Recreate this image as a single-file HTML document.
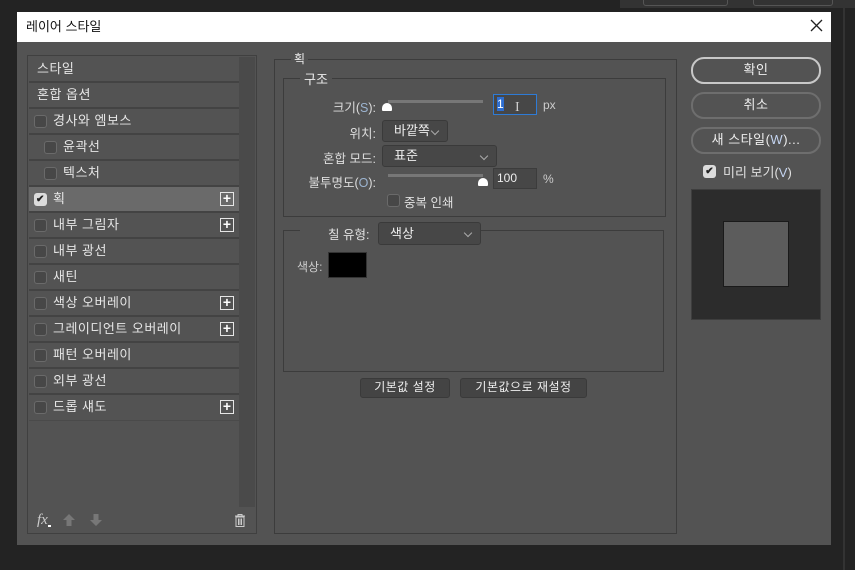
<!DOCTYPE html>
<html><head><meta charset="utf-8"><style>
*{margin:0;padding:0;box-sizing:border-box}
body{width:855px;height:570px;background:#232323;position:relative;overflow:hidden;font-family:"Liberation Sans","Noto Sans CJK KR",sans-serif;font-size:12px;color:#e0e0e0}
.a{position:absolute}
.dlg{left:17px;top:12px;width:814px;height:533px;background:#535353}
.title{left:17px;top:12px;width:814px;height:30px;background:#fff;color:#111;font-size:13px;line-height:30px;padding-left:9px}
.row{position:absolute;left:29px;width:210px;height:26px;border-bottom:2px solid #434343;line-height:24px;color:#e6e6e6;font-size:13px;letter-spacing:0.5px}
.cb{position:absolute;width:13px;height:13px;border:1.5px solid #6a6a6a;border-radius:3px;background:#474747}
.cbx{position:absolute;width:13px;height:13px;border-radius:3px;background:#dcdcdc;color:#222;font-size:10px;line-height:13px;text-align:center;font-weight:bold}
.plus{position:absolute;left:191px;top:5px;width:14px;height:14px;border:1px solid #e6e6e6;color:#fff;font-size:14px;line-height:11px;text-align:center;font-weight:bold;letter-spacing:0}
.fs{position:absolute;border:1px solid #3c3c3c}
.btn{position:absolute;border:2px solid #6e6e6e;border-radius:13px;text-align:center;line-height:21px;color:#eee;font-size:13px;letter-spacing:0.5px}
.dd{position:absolute;background:#474747;border:1px solid #3a3a3a;border-radius:3px;padding-left:11px;color:#eee;font-size:13px}
.dd:after{content:"";position:absolute;right:9px;top:7px;width:5px;height:5px;border-right:1px solid #aaa;border-bottom:1px solid #aaa;transform:rotate(45deg)}
.lbl{position:absolute;text-align:right;color:#ddd;font-size:12.5px}
.inp{position:absolute;background:#474747;border:1px solid #3c3c3c;color:#eee;padding-left:3px}
.sb{position:absolute;background:#444;border:1px solid #3a3a3a;border-radius:3px;text-align:center;line-height:16px;color:#eee;letter-spacing:0.5px}
.th{position:absolute;width:10px;height:8px;background:#fff;border-radius:5px 5px 1px 1px}
</style></head><body>
<div class="a" style="left:620px;top:0;width:235px;height:8px;background:#333"></div>
<div class="a" style="left:643px;top:0;width:85px;height:6px;border:1px solid #555;border-top:none;border-radius:0 0 3px 3px"></div>
<div class="a" style="left:753px;top:0;width:80px;height:6px;border:1px solid #555;border-top:none;border-radius:0 0 3px 3px"></div>
<div class="a" style="left:843px;top:0;width:2px;height:570px;background:#333"></div>
<div class="a dlg"></div>
<div class="a title">레이어 스타일</div>
<svg class="a" style="left:810px;top:19px" width="13" height="13"><path d="M1 1L12 12M12 1L1 12" stroke="#222" stroke-width="1.3"/></svg>

<div class="a" style="left:27px;top:55px;width:230px;height:479px;border:1px solid #404040"></div>
<div class="a" style="left:239px;top:57px;width:16px;height:450px;background:#4a4a4a"></div>

<div class="row" style="top:57px;padding-left:8px">스타일</div>
<div class="row" style="top:83px;padding-left:8px">혼합 옵션</div>
<div class="row" style="top:109px;padding-left:24px"><span class="cb" style="left:5px;top:6px"></span>경사와 엠보스</div>
<div class="row" style="top:135px;padding-left:34px"><span class="cb" style="left:15px;top:6px"></span>윤곽선</div>
<div class="row" style="top:161px;padding-left:34px"><span class="cb" style="left:15px;top:6px"></span>텍스처</div>
<div class="row" style="top:187px;padding-left:24px;background:#6a6a6a"><span class="cbx" style="left:5px;top:6px">✔</span>획<span class="plus">+</span></div>
<div class="row" style="top:213px;padding-left:24px"><span class="cb" style="left:5px;top:6px"></span>내부 그림자<span class="plus">+</span></div>
<div class="row" style="top:239px;padding-left:24px"><span class="cb" style="left:5px;top:6px"></span>내부 광선</div>
<div class="row" style="top:265px;padding-left:24px"><span class="cb" style="left:5px;top:6px"></span>새틴</div>
<div class="row" style="top:291px;padding-left:24px"><span class="cb" style="left:5px;top:6px"></span>색상 오버레이<span class="plus">+</span></div>
<div class="row" style="top:317px;padding-left:24px"><span class="cb" style="left:5px;top:6px"></span>그레이디언트 오버레이<span class="plus">+</span></div>
<div class="row" style="top:343px;padding-left:24px"><span class="cb" style="left:5px;top:6px"></span>패턴 오버레이</div>
<div class="row" style="top:369px;padding-left:24px"><span class="cb" style="left:5px;top:6px"></span>외부 광선</div>
<div class="row" style="top:395px;padding-left:24px;border-bottom:1px solid #4a4a4a"><span class="cb" style="left:5px;top:6px"></span>드롭 섀도<span class="plus">+</span></div>

<div class="a" style="left:37px;top:512px;font-style:italic;font-family:'Liberation Serif',serif;font-size:15px;color:#ccc">fx</div>
<div class="a" style="left:48px;top:525px;width:3px;height:2px;background:#fff"></div>
<svg class="a" style="left:63px;top:514px" width="12" height="13"><path d="M6 0L12 6H8.5V12H3.5V6H0Z" fill="#777"/></svg>
<svg class="a" style="left:90px;top:514px" width="12" height="13"><path d="M6 12L12 6H8.5V0H3.5V6H0Z" fill="#777"/></svg>
<svg class="a" style="left:234px;top:514px" width="12" height="13"><path d="M1 2H11M4 2V0.5H8V2M2 3H10V12.5H2Z M4.5 4.5V11 M6 4.5V11 M7.5 4.5V11" stroke="#ccc" fill="none" stroke-width="1"/></svg>

<div class="fs" style="left:274px;top:59px;width:403px;height:475px"></div>
<div class="a" style="left:291px;top:50px;padding:0 3px;background:#535353;color:#eee;font-size:12px">획</div>
<div class="fs" style="left:283px;top:78px;width:383px;height:139px"></div>
<div class="a" style="left:300px;top:69px;padding:0 4px;background:#535353;color:#eee;font-size:13px">구조</div>

<div class="lbl" style="left:300px;top:97px;width:76px">크기(<span style="color:#9cb4d0">S</span>):</div>
<div class="a" style="left:388px;top:100px;width:95px;height:3px;background:#777"></div>
<div class="th" style="left:382px;top:103px"></div>
<div class="inp" style="left:493px;top:94px;width:44px;height:21px;border:1px solid #2e7bd6;line-height:19px"><span style="background:#2e6ed0;color:#fff">1</span></div>
<div class="a" style="left:515px;top:100px;color:#ccc;font-size:14px;font-family:'Liberation Serif',serif">I</div>
<div class="a" style="left:543px;top:98px;color:#ccc">px</div>

<div class="lbl" style="left:300px;top:123px;width:76px">위치:</div>
<div class="dd" style="left:382px;top:120px;width:66px;height:22px;line-height:20px">바깥쪽</div>
<div class="lbl" style="left:290px;top:148px;width:86px">혼합 모드:</div>
<div class="dd" style="left:382px;top:145px;width:115px;height:22px;line-height:20px">표준</div>
<div class="lbl" style="left:290px;top:172px;width:86px">불투명도(<span style="color:#9cb4d0">O</span>):</div>
<div class="a" style="left:388px;top:174px;width:95px;height:3px;background:#777"></div>
<div class="th" style="left:478px;top:178px"></div>
<div class="inp" style="left:493px;top:168px;width:44px;height:21px;line-height:19px">100</div>
<div class="a" style="left:543px;top:172px;color:#ccc">%</div>
<span class="cb" style="left:387px;top:194px"></span>
<div class="a" style="left:404px;top:192px;font-size:12.5px">중복 인쇄</div>

<div class="fs" style="left:283px;top:230px;width:381px;height:142px"></div>
<div class="a" style="left:300px;top:222px;width:80px;height:16px;background:#535353"></div>
<div class="a" style="left:328px;top:224px;font-size:12.5px">칠 유형:</div>
<div class="dd" style="left:378px;top:222px;width:103px;height:23px;line-height:21px">색상</div>
<div class="a" style="left:297px;top:258px;color:#ccc">색상:</div>
<div class="a" style="left:328px;top:252px;width:39px;height:26px;background:#000;border:1px solid #333"></div>

<div class="sb" style="left:360px;top:378px;width:90px;height:20px">기본값 설정</div>
<div class="sb" style="left:460px;top:378px;width:127px;height:20px">기본값으로 재설정</div>

<div class="btn" style="left:691px;top:57px;width:130px;height:27px;border-color:#c8c8c8">확인</div>
<div class="btn" style="left:691px;top:92px;width:130px;height:27px">취소</div>
<div class="btn" style="left:691px;top:127px;width:130px;height:27px">새 스타일(<span style="color:#c4d4f0">W</span>)...</div>
<span class="cbx" style="left:703px;top:165px">✔</span>
<div class="a" style="left:723px;top:162px;font-size:13px">미리 보기(<span style="color:#c4d4f0">V</span>)</div>
<div class="a" style="left:691px;top:189px;width:130px;height:131px;background:#2c2c2c;border:1px solid #3e3e3e"></div>
<div class="a" style="left:723px;top:221px;width:66px;height:66px;background:#5c5c5c;border:1px solid #1a1a1a"></div>
</body></html>
